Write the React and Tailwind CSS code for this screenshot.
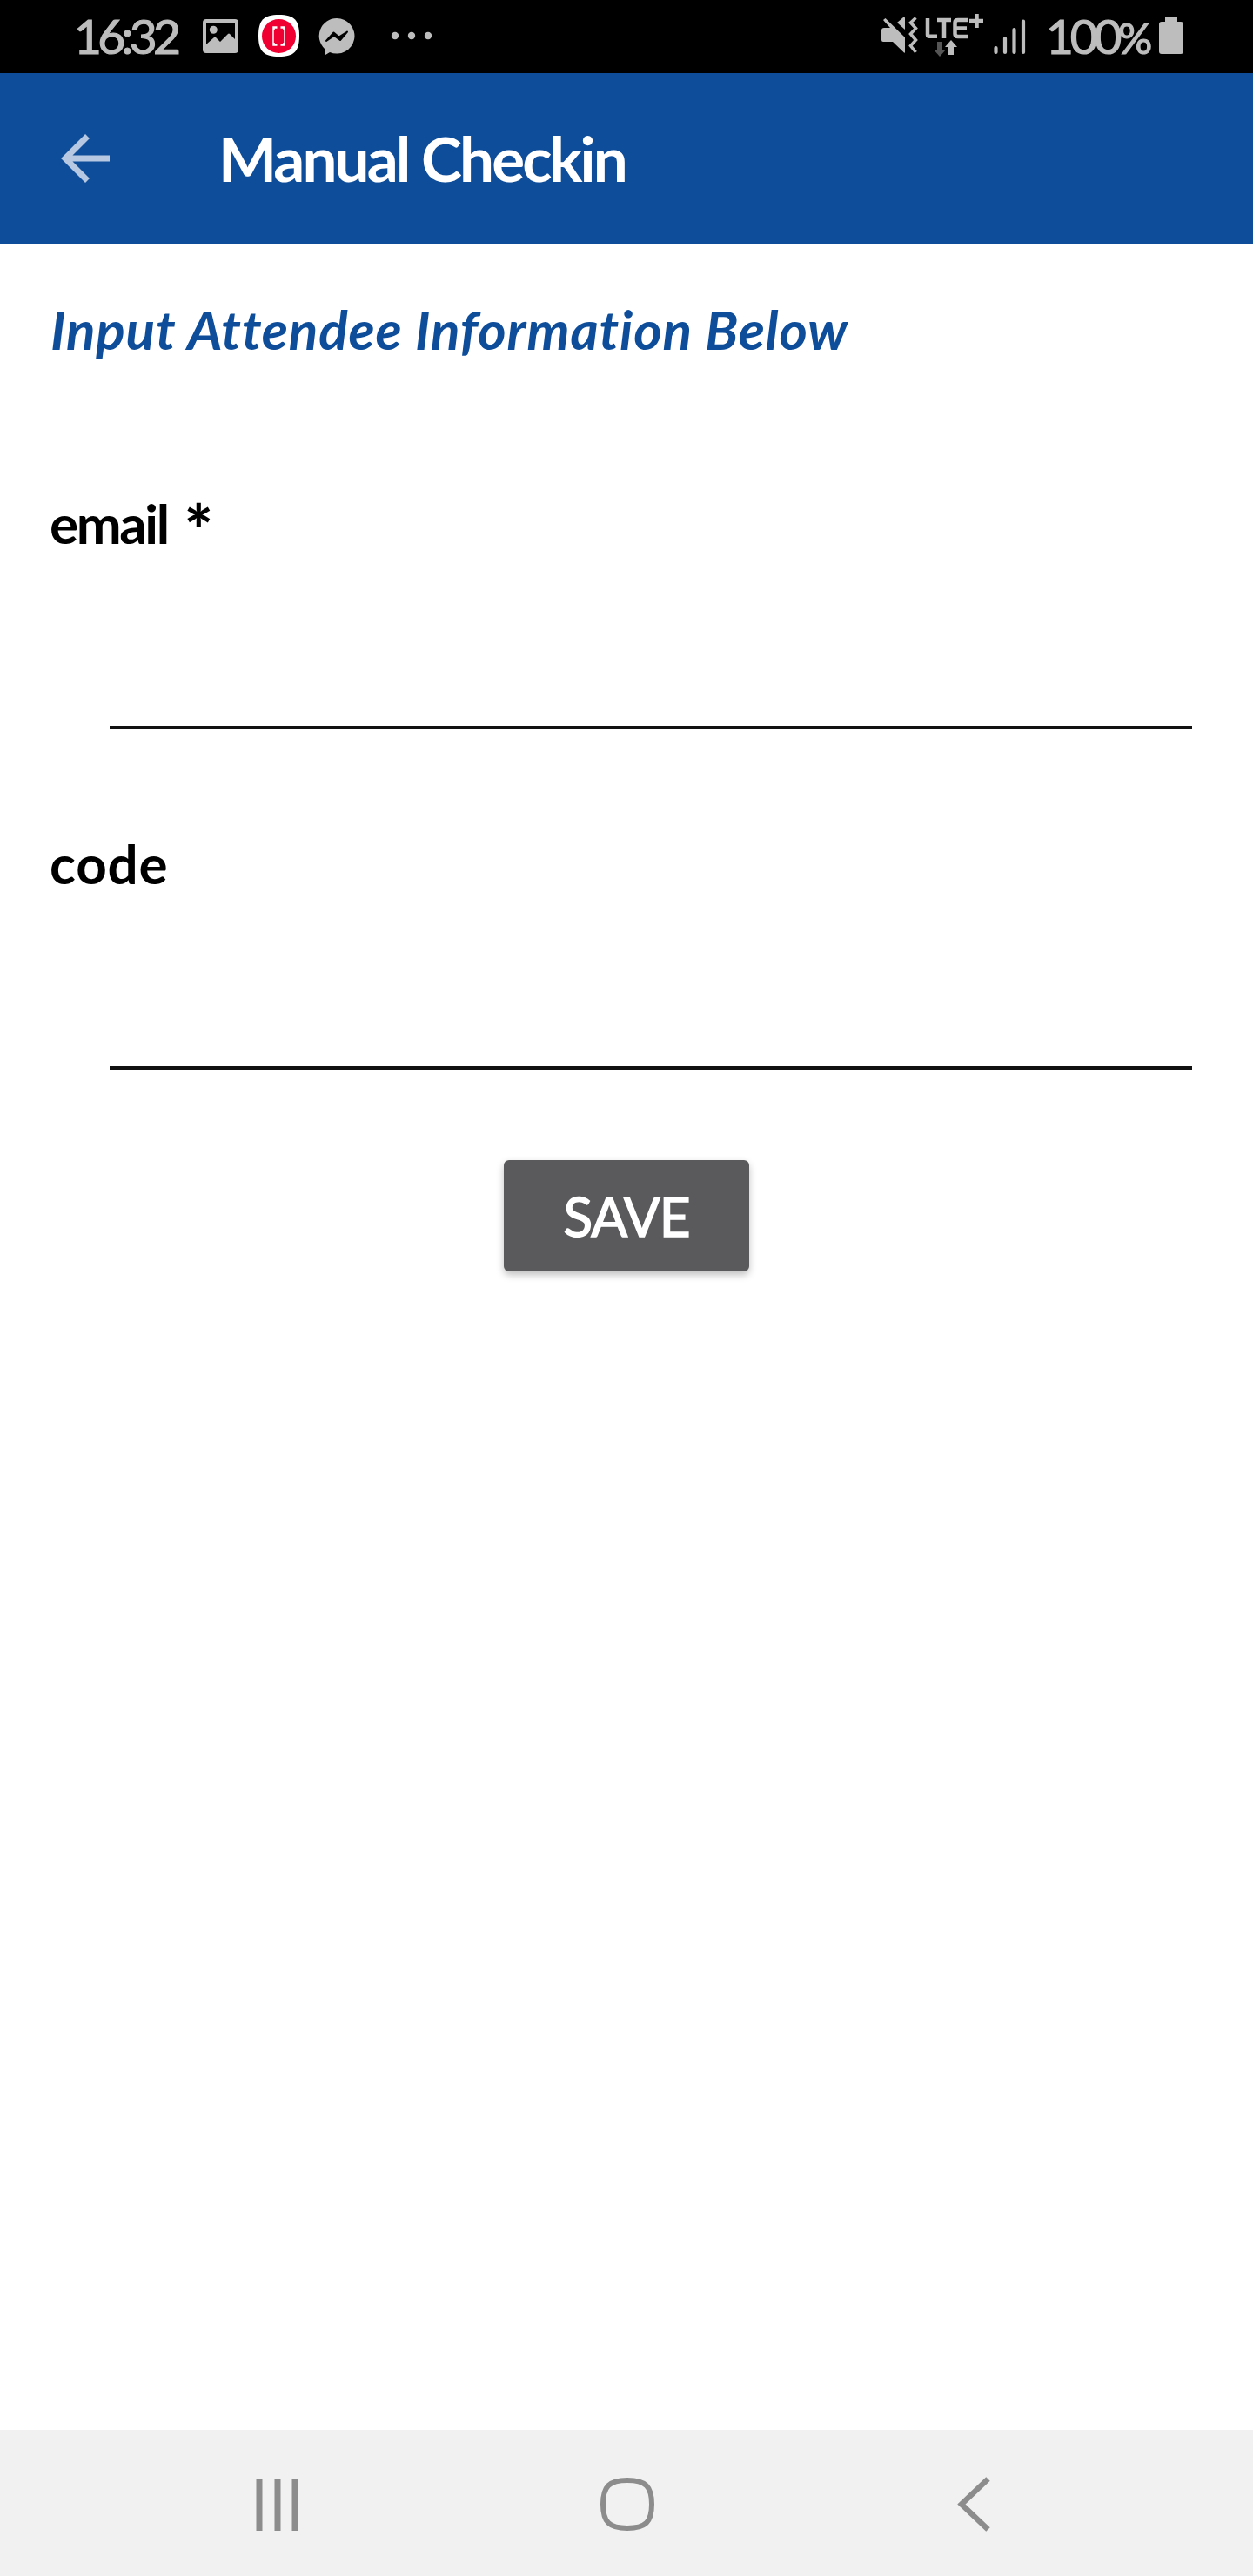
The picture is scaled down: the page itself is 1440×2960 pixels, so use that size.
import React from "react";

function StatusBar() {
  return (
    <div className="flex h-[84px] shrink-0 items-start bg-black text-[#bdbdbd]">
      <span className="ml-[85px] w-[123px] text-[55px] leading-[82px] tracking-[-4.600px] whitespace-nowrap [-webkit-text-stroke:1.2px_currentColor]">16:32</span>
      <svg className="ml-[25px] mt-[22px] h-[39px] w-[41px]" viewBox="0 0 41 39" fill="currentColor">
        <path fillRule="evenodd" d="M4 0h33a4 4 0 0 1 4 4v31a4 4 0 0 1-4 4H4a4 4 0 0 1-4-4V4a4 4 0 0 1 4-4zM4 4v25l9-8q1-1 2 0l5 5 9-9q1-1 2 0l6 6V4z" />
        <circle cx="12.300" cy="12.300" r="4.500" />
      </svg>
      <svg className="ml-[22px] mt-[17px] h-[48px] w-[49px]" viewBox="0 0 49 48">
        <path d="M24.500 0C42 0 48 6 48 24S42 48 24.500 48 1 42 1 24 7 0 24.500 0z" fill="#fff" />
        <circle cx="24.500" cy="24.500" r="19.500" fill="#f00032" />
        <path d="M18 17v15M31 17v15" stroke="#fff" strokeWidth="1.500" />
        <path d="M18.500 17v-2.500h4M30.500 17v-2.500h-4M18.500 32v2.500h4M30.500 32v2.500h-4" stroke="#fff" strokeWidth="2.500" fill="none" />
      </svg>
      <svg className="ml-[21px] mt-[21px] h-[42px] w-[42px]" viewBox="0 0 42 42">
        <path d="M21 0a20.500 20.300 0 1 1-8 39L8 42q-1 0-1-2v-5A20.300 20.300 0 0 1 21 0z" fill="currentColor" />
        <path d="M9 26l8.500-9.500 6 5L33 15.500 25 25l-7-5z" fill="#000" stroke="#000" strokeWidth="2" strokeLinejoin="round" />
      </svg>
      <svg className="ml-[41px] mt-[36px] h-[10px] w-[48px]" viewBox="0 0 48 10" fill="currentColor">
        <circle cx="5" cy="5" r="4.200" />
        <circle cx="24" cy="5" r="4.200" />
        <circle cx="43" cy="5" r="4.200" />
      </svg>
      <svg className="ml-auto mt-[19px] h-[43px] w-[43px]" viewBox="0 0 43 43" fill="currentColor">
        <path d="M3 4l2.500-2L28 24v17q0 1-1 .5L14 29H3q-2 0-2-2V16q0-3 3-3h7zM19 7l7-6q2-1 2 1v13z" />
        <path d="M40.500 1.500L34.500 7l6 6.500-6 6.500 6 7-6 6.500 6 7.500" fill="none" stroke="currentColor" strokeWidth="3.500" />
      </svg>
      <svg className="ml-[8px] mt-[15px] h-[50px] w-[68px]" viewBox="0 0 68 50" fill="none" stroke="currentColor" strokeWidth="4.500">
        <path d="M3 6v19q0 1.700 2 1.700h9M14 8h16M22 8v21M49 8H38q-3.500 0-3.500 3v13q0 3 3.500 3h11M35 17.500h13M51 9h16M59.500 1v16" />
        <path d="M14 33h6v9h4l-7 8-7-8h4z" fill="#555" stroke="none" />
        <path d="M30 31l7 8h-4v9h-6v-9h-4z" fill="currentColor" stroke="none" />
      </svg>
      <svg className="ml-[9px] mt-[21px] h-[42px] w-[40px]" viewBox="0 0 40 42" fill="none" stroke="currentColor" strokeWidth="4.200" strokeLinecap="round">
        <path d="M4.500 34v5M15 23v16M25.500 13v26M36 3.500v35.500" />
      </svg>
      <span className="ml-[22px] w-[120px] text-[55px] leading-[82px] tracking-[-4.200px] whitespace-nowrap [-webkit-text-stroke:1.2px_currentColor]">100<span className="text-[49px]">%</span></span>
      <svg className="ml-[9px] mr-[79px] mt-[19px] h-[43px] w-[30px]" viewBox="0 0 30 43" fill="currentColor">
        <path d="M9 0h12q1 0 1 1v5h4q3 0 3 3v31q0 3-3 3H4q-3 0-3-3V9q0-3 3-3h4V1q0-1 1-1z" />
      </svg>
    </div>
  );
}

function Field({ id, label, labelClass, required }) {
  return (
    <div className="flex flex-col">
      <label htmlFor={id} className="ml-[57px] flex h-[80px] text-[62px] leading-[80px] font-bold text-black">
        <span className={labelClass}>{label}</span>
        {required && <span className="ml-[19px] text-[78px] leading-[92px] font-black">*</span>}
      </label>
      <input id={id} className="ml-[126px] mr-[70px] h-[197px] border-b-[4px] border-[#111] bg-transparent text-[62px] outline-none" />
    </div>
  );
}

export default function App() {
  return (
    <div className="flex h-[2960px] w-[1440px] flex-col overflow-hidden bg-white font-['Lato',sans-serif]">
      <StatusBar />
      <header className="flex h-[196px] shrink-0 items-center bg-[#0e4d99] text-white">
        <svg className="ml-[70px] h-[56px] w-[56px]" viewBox="0 0 56 56" fill="none" stroke="#b7c9e2" strokeWidth="7">
          <path d="M30.500 2.500L5 28l25.500 25.500M7 28h49" />
        </svg>
        <h1 className="ml-[125px] text-[71px] leading-[80px] font-bold tracking-[-2.900px] whitespace-nowrap">Manual Checkin</h1>
      </header>
      <main className="flex flex-1 flex-col pt-[58px]">
        <p className="ml-[58px] text-[62px] leading-[80px] font-bold tracking-[0.850px] whitespace-nowrap text-[#0e4d99] italic">Input Attendee Information Below</p>
        <div className="mt-[143px] flex flex-col gap-[114px]">
          <Field id="email" label="email" labelClass="tracking-[-2.400px]" required />
          <Field id="code" label="code" labelClass="tracking-[0.800px]" />
        </div>
        <button className="mt-[104px] ml-[579px] h-[128px] w-[282px] rounded-[6px] bg-[#5a5a5c] text-[62px] leading-[80px] tracking-[-1px] text-white shadow-[0_4px_8px_rgba(0,0,0,0.25)] [-webkit-text-stroke:1.5px_currentColor]">SAVE</button>
      </main>
      <nav className="flex h-[168px] shrink-0 items-start bg-[#f1f1f1]">
        <svg className="ml-[294px] mt-[56px] h-[60px] w-[49px]" viewBox="0 0 49 60" fill="#8c8c8c">
          <path d="M.5 0h7v60h-7zM21.500 0h7v60h-7zM41.500 0h7v60h-7z" />
        </svg>
        <svg className="ml-[347px] mt-[55px] h-[61px] w-[62px]" viewBox="0 0 62 61" fill="none" stroke="#8c8c8c" strokeWidth="6">
          <path d="M31 3C52 3 59 10 59 30.500S52 58 31 58 3 51 3 30.500 10 3 31 3z" />
        </svg>
        <svg className="ml-[348px] mt-[54px] h-[63px] w-[38px]" viewBox="0 0 38 63" fill="none" stroke="#8c8c8c" strokeWidth="6.500">
          <path d="M35.500 2.500L5 31.500l30.500 29" />
        </svg>
      </nav>
    </div>
  );
}
